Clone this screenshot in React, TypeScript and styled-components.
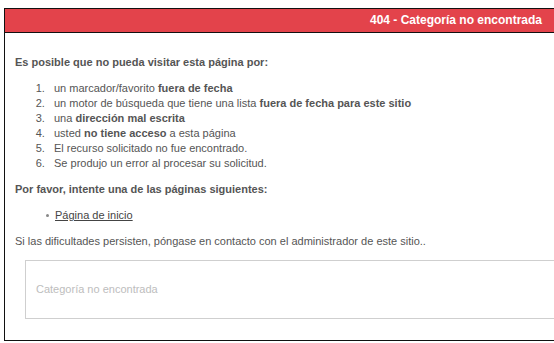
import React from "react";
import styled, { createGlobalStyle } from "styled-components";

const Global = createGlobalStyle`
  body {
    margin: 0;
    background: #fff;
    font-family: "Liberation Sans", Arial, Helvetica, sans-serif;
  }
`;

const Frame = styled.div`
  margin: 8px 0 0 4px;
  width: 560px;
  border: 1px solid #111;
  border-right: none;
  color: #555;
  font-size: 11px;
  line-height: 15px;
`;

const Header = styled.h1`
  margin: 0;
  height: 23px;
  line-height: 23px;
  padding-right: 23px;
  text-align: right;
  background-color: #e3434b;
  border-bottom: 1px solid #111;
  color: #fff;
  font-size: 12px;
  font-weight: bold;
`;

const Body = styled.div`
  padding: 11px 10px 21px 10px;
`;

const Lead = styled.p`
  margin: 11px 0;
  font-weight: bold;
`;

const Text = styled.p`
  margin: 11px 0;
`;

const Reasons = styled.ol`
  margin: 11px 0;
  padding-left: 39px;
  li::marker {
    content: counter(list-item) ".\\00a0\\00a0\\00a0";
  }
`;

const Pages = styled.ul`
  margin: 11px 0;
  padding-left: 40px;
  list-style: none;
`;

const PageItem = styled.li`
  position: relative;
  &::before {
    content: "";
    position: absolute;
    left: -9px;
    top: 6px;
    width: 3px;
    height: 3px;
    border-radius: 50%;
    background: #888;
  }
`;

const HomeLink = styled.a`
  color: #444;
  text-decoration: underline;
`;

const Note = styled.div`
  margin: 8px 0 0 10px;
  padding: 21px 10px;
  border: 1px solid #cfcfcf;
  border-right: none;
  color: #bdbdbd;
`;

const App = () => {
  return (
    <>
      <Global />
      <Frame>
        <Header>404 - Categoría no encontrada</Header>
        <Body>
          <Lead>Es posible que no pueda visitar esta página por:</Lead>
          <Reasons>
            <li>
              un marcador/favorito <b>fuera de fecha</b>
            </li>
            <li>
              un motor de búsqueda que tiene una lista{" "}
              <b>fuera de fecha para este sitio</b>
            </li>
            <li>
              una <b>dirección mal escrita</b>
            </li>
            <li>
              usted <b>no tiene acceso</b> a esta página
            </li>
            <li>El recurso solicitado no fue encontrado.</li>
            <li>Se produjo un error al procesar su solicitud.</li>
          </Reasons>
          <Lead>Por favor, intente una de las páginas siguientes:</Lead>
          <Pages>
            <PageItem>
              <HomeLink href="#">Página de inicio</HomeLink>
            </PageItem>
          </Pages>
          <Text>
            Si las dificultades persisten, póngase en contacto con el
            administrador de este sitio..
          </Text>
          <Note>Categoría no encontrada</Note>
        </Body>
      </Frame>
    </>
  );
};

export default App;
